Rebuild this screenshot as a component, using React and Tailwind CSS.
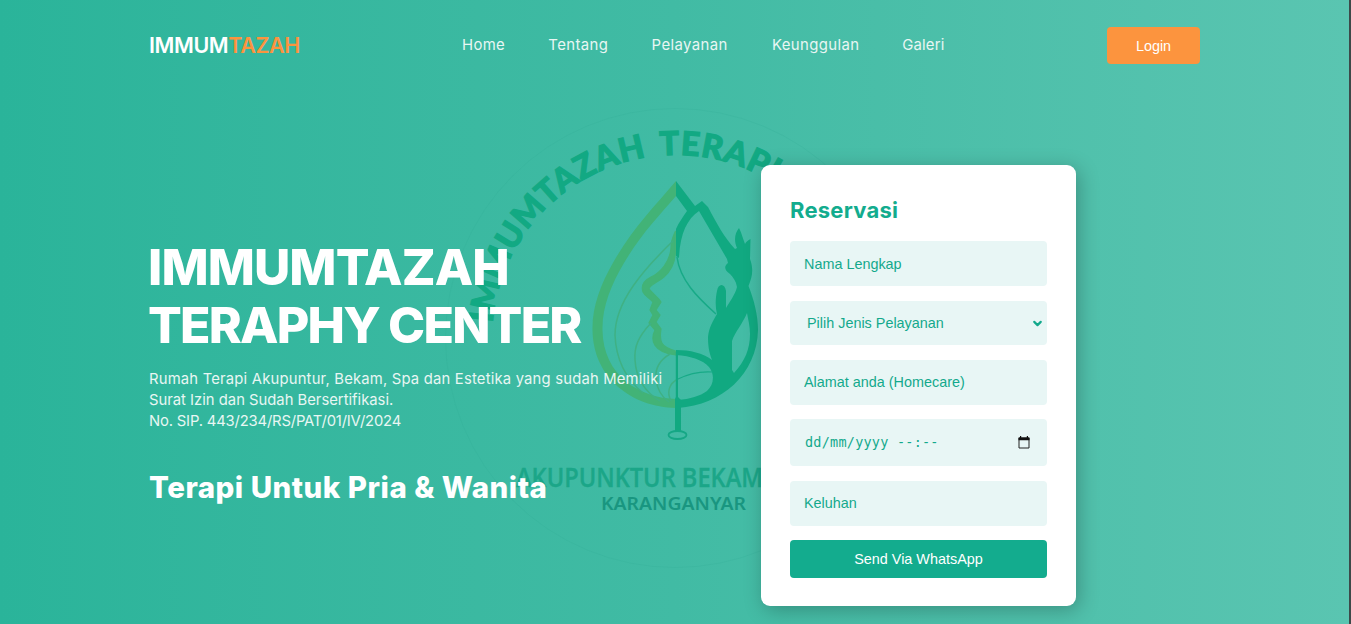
import { ChevronDown } from "lucide-react";

const NAV = [
  { label: "Home", cls: "w-[43px] tracking-[0.35px]" },
  { label: "Tentang", cls: "w-[60px] tracking-[0.4px]" },
  { label: "Pelayanan", cls: "w-[77px] tracking-[0.4px]" },
  { label: "Keunggulan", cls: "w-[87px] tracking-[0.4px]" },
  { label: "Galeri", cls: "w-[43px] tracking-[0.2px]" },
];

const FIELD =
  "w-full rounded-[4px] bg-[#e8f6f5] px-[14px] text-[14.4px] text-[#13a98c] placeholder:text-[#13a98c] placeholder:opacity-100 outline-none";

function Emblem() {
  return (
    <svg
      className="pointer-events-none absolute left-[440px] top-[100px]"
      width="480"
      height="480"
      viewBox="440 100 480 480"
      fill="none"
    >
      <defs>
        <path id="ring" d="M492 339A184 184 0 0 1 860 339" />
      </defs>
      <circle cx="675" cy="338" r="229.5" stroke="#2fa58f" strokeOpacity=".18" strokeWidth="1" />
      <g fill="#12a983" stroke="#12a983" strokeWidth="1.1" fontFamily="Lato, sans-serif" fontWeight="900" fontSize="33">
        <text>
          <textPath href="#ring" startOffset="16" textLength="243" lengthAdjust="spacing">IMMUMTAZAH</textPath>
        </text>
        <text>
          <textPath href="#ring" startOffset="272.500" textLength="118" lengthAdjust="spacing">TERAPI</textPath>
        </text>
      </g>

      <g fill="#42b377">
        <path d="M676 181C654 207 633 228 614 261C600 285 592 308 592.500 330C593 378 632 407 676 408V399C640 398 603 376 602.500 330C602 307 611 285 624 263C641 234 659 216 676 196Z" />
        <path stroke="#42b377" strokeWidth="1.2" d="M675.500 231C673 237 671 240 671 248C670 262 660 273 651 277C643 281 641 286 643 292C645 296 648 297 653 302L650 310L653 315L649 323L655 330C650 340 653 352 675.500 355V351C661 347 659 342 661 329L656 322L660 315L656 310L661 302C658 297 654 295 649 289C650 284 657 283 664 277C672 270 675.500 260 675.500 250Z" />
      </g>
      <g stroke="#3fb184" strokeWidth="1.5">
        <path d="M673 241C643 270 615 302 615 335C616 360 626 379 643 393" />
        <path d="M651 323C638 337 634 347 635 360C636 378 645 392 660 401" />
        <path d="M670 354C658 361 655 370 656 379C657 390 662 397 669 402" />
        <path d="M678 379C668 384 667 393 671 401" />
      </g>

      <g fill="#11a981">
        <path d="M676 181L695 206L702 201L708 207C717 224 724 237 735 249L737 248C733.500 240 735 233 739 228C742 234 743 239 745 244C746 242 748 240 750.500 239L750 259C754 270 752 277 748.500 286C754 300 758 315 758 330C757 374 722 405 678 408V400C690 399 700 396 707 391C714 385 715 374 709 367C703 360 691 356 676 355V350C690 350 703 353 712 360C709 352 708 346 708 337C709 327 713 321 717 314C715 306 715.500 298 717 291C718 283 725 283 726 291V308C730 301 735 295 737 287C736 281 733 277 730 274C724 270 724 266 728 263L727 259L699 211C687 219 680 234 679 258L676 256V229C679 222 683 217 687 211L676 196ZM747 313C743 323 735 332 732 341V370L734 373C745 361 750 349 750 334C750 326 748 319 747 313Z" />
        <path d="M675.800 352H678V397L681 400V431H675V399L675.800 397Z" />
      </g>
      <path d="M677 257C680 280 697 297 716 314" stroke="#18aa87" strokeWidth="1.500" />
      <path d="M678 379C688 374 701 371 713 372" stroke="#18aa87" strokeWidth="1.200" />
      <ellipse cx="677.500" cy="435" rx="9" ry="4" stroke="#15a785" strokeWidth="1.800" />

      <text x="516" y="487" fill="#1ba688" stroke="#1ba688" strokeWidth=".3" fontFamily="'Open Sans', sans-serif" fontWeight="600" fontSize="26.500" textLength="247" lengthAdjust="spacingAndGlyphs">
        AKUPUNKTUR BEKAM
      </text>
      <text x="601" y="509.500" fill="#199680" fontFamily="'Noto Sans', sans-serif" fontWeight="600" fontSize="18" textLength="145" lengthAdjust="spacingAndGlyphs">
        KARANGANYAR
      </text>
    </svg>
  );
}

function CalendarIcon() {
  return (
    <svg className="-mt-px" width="12" height="13" viewBox="0 0 12 13" fill="none">
      <path d="M1 2H11V12H1Z" stroke="#222" strokeWidth="1" />
      <path d="M.5 1.500H11.500V4.200H.5ZM2 0H3.200V2H2ZM8.800 0H10V2H8.800Z" fill="#111" />
    </svg>
  );
}

export default function App() {
  return (
    <div className="relative h-[624px] w-full overflow-hidden border-r-2 border-[#3c4a49] bg-linear-to-r from-[#2ab49a] via-[#41bba4] to-[#5ac5b1] font-['Inter',sans-serif] text-white">
      <Emblem />
      <div className="relative ml-[149px] w-[1051px]">
        <header className="flex h-[91px] items-center">
          <a className="w-[313px] whitespace-nowrap text-[21.5px] font-semibold tracking-[-0.4px]">
            IMMUM<span className="text-[#fc943e]">TAZAH</span>
          </a>
          <nav className="flex gap-[43.3px] text-[14.9px] text-[#e8f6f3]">
            {NAV.map((n) => (
              <a key={n.label} className={"block whitespace-nowrap " + n.cls}>{n.label}</a>
            ))}
          </nav>
          <button className="ml-auto h-[37px] w-[93px] rounded-[4px] bg-[#fc943e] pt-[2px] font-['Liberation_Sans',Arial,sans-serif] text-[14.4px]">
            Login
          </button>
        </header>

        <main className="flex pt-[74px]">
          <section className="w-[612px] shrink-0 whitespace-nowrap pt-[73px]">
            <h1 className="text-[50px] font-extrabold leading-[58px]">
              <span className="-ml-px block tracking-[-0.9px]">IMMUMTAZAH</span>
              <span className="-ml-px block tracking-[-1.8px]">TERAPHY CENTER</span>
            </h1>
            <p className="mt-[15px] text-[14.8px] leading-[21px] text-[#e8f6f3]">
              <span className="block tracking-[0.2px]">Rumah Terapi Akupuntur, Bekam, Spa dan Estetika yang sudah Memiliki</span>
              <span className="block tracking-[0px]">Surat Izin dan Sudah Bersertifikasi.</span>
              <span className="block tracking-[-0.17px]">No. SIP. 443/234/RS/PAT/01/IV/2024</span>
            </p>
            <h2 className="mt-[34px] text-[29.5px] font-extrabold leading-[43px] tracking-[0.5px]">Terapi Untuk Pria &amp; Wanita</h2>
          </section>

          <form className="flex h-[441px] w-[315px] shrink-0 flex-col rounded-[9px] bg-white px-[29px] pt-[29px] font-['Liberation_Sans',Arial,sans-serif] shadow-[3px_4px_20px_rgba(0,0,0,0.25)]">
            <h3 className="mb-[14px] font-['Inter',sans-serif] text-[22px] font-bold leading-[33px] tracking-[0.25px] text-[#13ac8e]">Reservasi</h3>
            <input className={FIELD + " mb-[15px] h-[45px]"} placeholder="Nama Lengkap" />
            <div className={FIELD + " mb-[15px] flex h-[44px] items-center justify-between pl-[17px] pr-[4px]"}>
              <span className="pt-[2px]">Pilih Jenis Pelayanan</span>
              <ChevronDown className="-mr-px" size={13} strokeWidth={4} />
            </div>
            <input className={FIELD + " mb-[14px] h-[45px] pb-[2px]"} placeholder="Alamat anda (Homecare)" />
            <div className={FIELD + " mb-[15px] flex h-[47px] items-center justify-between pr-[17px]"}>
              <span className="ml-px whitespace-pre font-['DejaVu_Sans_Mono',monospace] text-[13.5px] tracking-[0.23px]">dd/mm/yyyy --:--</span>
              <CalendarIcon />
            </div>
            <input className={FIELD + " mb-[14px] h-[45px] pb-[2px]"} placeholder="Keluhan" />
            <button className="h-[38px] rounded-[4px] bg-[#13ac8e] pt-[2px] text-[14.4px] text-white">Send Via WhatsApp</button>
          </form>
        </main>
      </div>
    </div>
  );
}
